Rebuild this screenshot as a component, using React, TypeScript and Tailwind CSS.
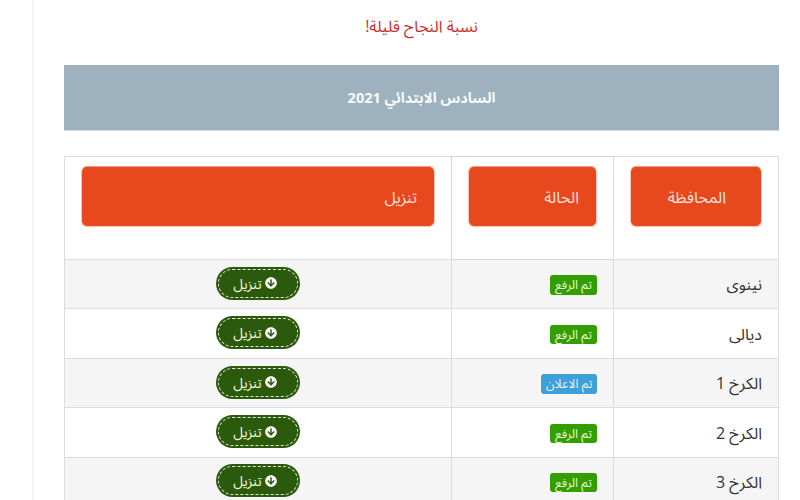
import { FaArrowCircleDown } from "react-icons/fa";

const rows = [
  { name: "نينوى", status: "تم الرفع", done: true },
  { name: "ديالى", status: "تم الرفع", done: true },
  { name: "الكرخ 1", status: "تم الاعلان", done: false },
  { name: "الكرخ 2", status: "تم الرفع", done: true },
  { name: "الكرخ 3", status: "تم الرفع", done: true },
];

function HeaderButton({ label, inset }: { label: string; inset?: boolean }) {
  return (
    <div
      className={
        inset
          ? "h-[61px] rounded-[6px] border border-[#f8c6b6] border-t-[#ee9c83] bg-[#e8481e] pr-[35px] flex items-center text-[16px] text-[#fbe3da]"
          : "h-[61px] rounded-[6px] border border-[#f8c6b6] border-t-[#ee9c83] bg-[#e8481e] pr-[17px] flex items-center text-[16px] text-[#fbe3da]"
      }
    >
      {label}
    </div>
  );
}

function DownloadButton() {
  return (
    <div className="mx-auto w-[84px] h-[33px] rounded-full bg-[#2c5a0c] p-[2px]">
      <div className="h-full rounded-full border border-dashed border-[#dfe7d6] pr-[6px] flex items-center justify-center gap-[3px] text-[14px] text-[#f3f5dc]">
        <FaArrowCircleDown className="w-[12px] h-[12px] text-white" />
        <span>تنزيل</span>
      </div>
    </div>
  );
}

export default function App() {
  return (
    <div
      dir="rtl"
      className="h-[500px] overflow-hidden bg-white font-['Open_Sans','Noto_Sans_Arabic','Noto_Naskh_Arabic','DejaVu_Sans',sans-serif]"
    >
      <div className="w-[768px] mr-0 ml-auto h-full border-l-2 border-[#f4f4f4] pl-[30px] pr-[21px]">
        <p className="pt-[15px] h-[65px] text-center text-[16px] leading-[22px] text-[#c9302c]">
          نسبة النجاح قليلة!
        </p>
        <div className="h-[66px] bg-[#9eb1be] flex items-center justify-center text-[14.5px] font-bold text-[#f8fafb] border-b border-[#d5dce1]">
          السادس الابتدائي 2021
        </div>
        <table className="mt-[25px] w-[715px] table-fixed border-collapse border border-[#dddddd] text-[16px] text-[#333333]">
          <thead>
            <tr className="h-[103px]">
              <th className="w-[165px] border border-[#dddddd] pt-[9px] pb-[31px] px-[16px] align-top font-normal text-right">
                <HeaderButton label="المحافظة" inset />
              </th>
              <th className="w-[162px] border border-[#d4d4d4] pt-[9px] pb-[31px] px-[16px] align-top font-normal text-right">
                <HeaderButton label="الحالة" />
              </th>
              <th className="border border-[#dddddd] pt-[9px] pb-[31px] px-[16px] align-top font-normal text-right">
                <HeaderButton label="تنزيل" />
              </th>
            </tr>
          </thead>
          <tbody>
            {rows.map((row, i) => (
              <tr key={row.name} className={i % 2 === 0 ? "h-[49.45px] bg-[#f5f5f5]" : "h-[49.45px] bg-white"}>
                <td className="border border-[#dddddd] px-[16px] text-right">{row.name}</td>
                <td className="border border-[#dddddd] px-[16px] pb-[2px] text-right">
                  <span
                    className={
                      row.done
                        ? "inline-block rounded-[3px] px-[5px] text-[12.5px] leading-[19.5px] text-[#e9f7dc] bg-[#339e00]"
                        : "inline-block rounded-[3px] px-[4.5px] text-[12.5px] leading-[19.5px] text-[#e4f2fb] bg-[#3f9fd8]"
                    }
                  >
                    {row.status}
                  </span>
                </td>
                <td className="border border-[#dddddd] px-[16px] pb-[2px]">
                  <DownloadButton />
                </td>
              </tr>
            ))}
          </tbody>
        </table>
      </div>
    </div>
  );
}
